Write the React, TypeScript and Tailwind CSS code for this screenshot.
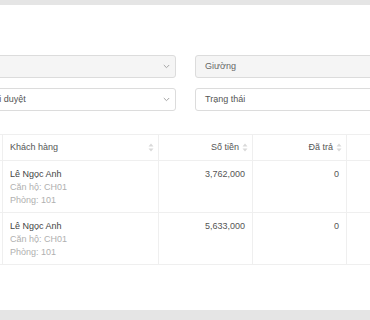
import React from "react";

const Chevron = () => (
  <svg width="7" height="5" viewBox="0 0 7 5" fill="none">
    <path d="M0.8 1 L3.5 3.7 L6.2 1" stroke="#a3a3a3" strokeWidth="1" />
  </svg>
);

const Sorter = () => (
  <svg width="6" height="9" viewBox="0 0 6 9">
    <path d="M3 0.5 L5.5 3.5 L0.5 3.5 Z" fill="#d9d9d9" />
    <path d="M3 8.5 L5.5 5.5 L0.5 5.5 Z" fill="#d9d9d9" />
  </svg>
);

const rows = [
  { name: "Lê Ngọc Anh", apt: "Căn hộ: CH01", room: "Phòng: 101", amount: "3,762,000", paid: "0" },
  { name: "Lê Ngọc Anh", apt: "Căn hộ: CH01", room: "Phòng: 101", amount: "5,633,000", paid: "0" },
];

export default function App() {
  return (
    <div
      className="w-[370px] h-[320px] overflow-hidden bg-[#e5e5e5] flex flex-col"
      style={{ fontFamily: '"Liberation Sans", Arial, sans-serif' }}
    >
      <div className="mt-[5px] h-[305px] bg-white flex flex-col pt-[50px] text-[9px]">
        {/* Filters */}
        <div className="flex flex-col gap-[10px]">
          <div className="flex gap-[19px] -ml-[30px]">
            <div className="w-[206px] shrink-0 h-[23px] rounded-[3px] border border-[#dcdcdc] bg-[#f5f5f5] flex items-center justify-end pr-[5px]">
              <Chevron />
            </div>
            <div className="w-[200px] shrink-0 h-[23px] rounded-[3px] border border-[#dcdcdc] bg-[#f5f5f5] flex items-center pl-[9px] text-[#666]">
              Giường
            </div>
          </div>
          <div className="flex gap-[19px] -ml-[30px]">
            <div className="w-[206px] shrink-0 h-[23px] rounded-[3px] border border-[#dcdcdc] bg-white flex items-center justify-between pr-[5px] text-[#555]">
              <span className="-ml-[10px] whitespace-nowrap">Trạng thái duyệt</span>
              <Chevron />
            </div>
            <div className="w-[200px] shrink-0 h-[23px] rounded-[3px] border border-[#dcdcdc] bg-white flex items-center pl-[9px] text-[#555]">
              Trạng thái
            </div>
          </div>
        </div>

        {/* Table */}
        <div className="mt-[23px] -ml-[80px] w-[500px] border-t border-[#efefef] flex flex-col">
          <div className="flex h-[26px] border-b border-[#efefef] text-[#555]">
            <div className="w-[83px] shrink-0 border-r border-[#efefef]" />
            <div className="w-[156px] shrink-0 border-r border-[#efefef] flex items-center justify-between pl-[7px] pr-[4px]">
              <span>Khách hàng</span>
              <Sorter />
            </div>
            <div className="w-[94px] shrink-0 border-r border-[#efefef] flex items-center justify-end gap-[3px] pr-[4px]">
              <span>Số tiền</span>
              <Sorter />
            </div>
            <div className="w-[94px] shrink-0 border-r border-[#efefef] flex items-center justify-end gap-[3px] pr-[4px]">
              <span>Đã trả</span>
              <Sorter />
            </div>
            <div className="flex-1" />
          </div>
          {rows.map((r, i) => (
            <div key={i} className="flex h-[52px] border-b border-[#efefef] leading-[13px]">
              <div className="w-[83px] shrink-0 border-r border-[#efefef]" />
              <div className="w-[156px] shrink-0 border-r border-[#efefef] pl-[7px] pt-[7px] flex flex-col">
                <span className="text-[#444]">{r.name}</span>
                <span className="text-[#b0b0b0]">{r.apt}</span>
                <span className="text-[#b0b0b0]">{r.room}</span>
              </div>
              <div className="w-[94px] shrink-0 border-r border-[#efefef] pr-[7px] pt-[7px] text-right text-[#555]">
                {r.amount}
              </div>
              <div className="w-[94px] shrink-0 border-r border-[#efefef] pr-[7px] pt-[7px] text-right text-[#555]">
                {r.paid}
              </div>
              <div className="flex-1" />
            </div>
          ))}
        </div>
      </div>
    </div>
  );
}
